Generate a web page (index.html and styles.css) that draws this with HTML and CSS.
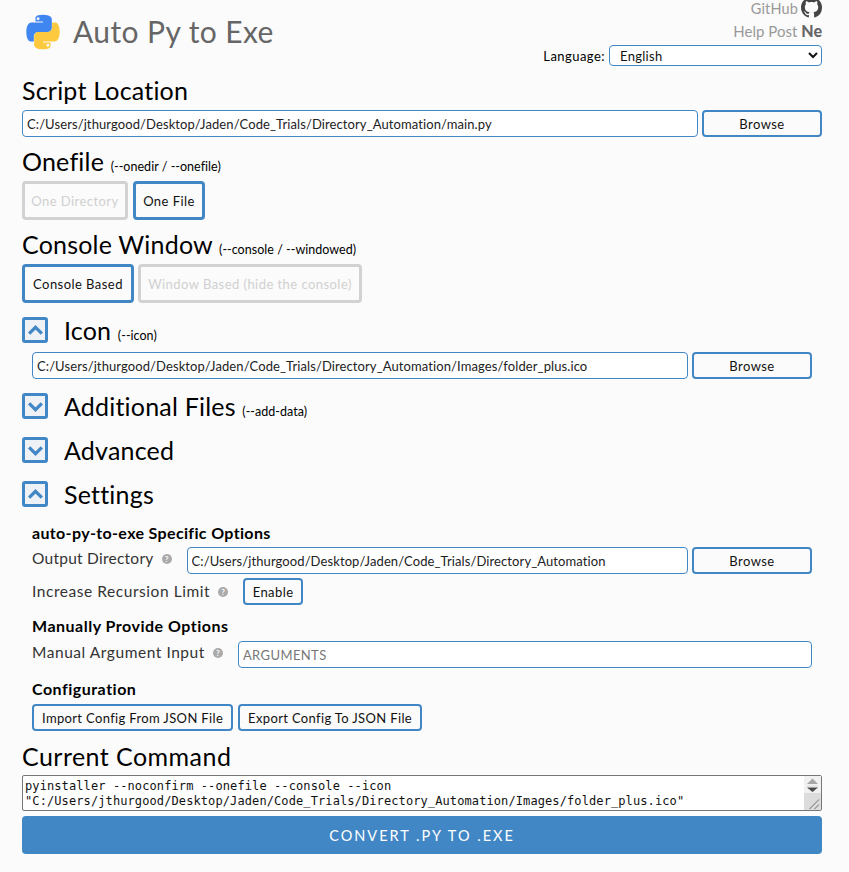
FILE: index.html
```html
<!DOCTYPE html>
<html lang="en">
<head>
<meta charset="utf-8">
<title>Auto Py to Exe</title>
<link rel="stylesheet" href="styles.css">
</head>
<body>
<header class="top">
  <div class="brand">
    <svg class="logo" viewBox="0 0 110 110" width="36" height="36" aria-hidden="true">
      <path fill="#3f86f0" d="M54 2C30 2 32 12 32 12l0 11h23v3H20S4 25 4 55s14 29 14 29h9V70s-1-15 15-15h26s14 1 14-14V17S85 2 54 2zM40 10a4.500 4.500 0 1 1 0 9 4.500 4.500 0 0 1 0-9z"/>
      <path fill="#fdc93e" d="M56 108c24 0 22-10 22-10l0-11H55v-3h35s16 1 16-29-14-29-14-29h-9v14s1 15-15 15H42s-14-1-14 14v24s-3 15 28 15zm14-8a4.500 4.500 0 1 1 0-9 4.500 4.500 0 0 1 0 9z"/>
    </svg>
    <h1 class="title">Auto Py to Exe</h1>
  </div>
  <div class="links">
    <a class="link"><span>GitHub</span>
      <svg class="gh" viewBox="0 0 16 16" width="21" height="21" aria-hidden="true"><path fill="#444" d="M8 0C3.580 0 0 3.580 0 8c0 3.540 2.290 6.530 5.470 7.590.4.070.55-.17.55-.38 0-.19-.01-.82-.01-1.490-2.010.37-2.530-.49-2.690-.94-.09-.23-.48-.94-.82-1.130-.28-.15-.68-.52-.01-.53.63-.01 1.080.58 1.230.82.720 1.210 1.870.87 2.330.66.070-.52.280-.87.510-1.070-1.780-.2-3.640-.89-3.640-3.950 0-.87.310-1.590.82-2.150-.08-.2-.36-1.020.08-2.120 0 0 .67-.21 2.200.82.640-.18 1.320-.27 2-.27s1.360.09 2 .27c1.530-1.040 2.200-.82 2.200-.82.440 1.100.16 1.920.08 2.120.51.560.82 1.270.82 2.150 0 3.070-1.870 3.750-3.650 3.950.29.250.54.730.54 1.480 0 1.070-.01 1.930-.01 2.200 0 .21.150.46.550.38A8.010 8.010 0 0 0 16 8c0-4.420-3.580-8-8-8z"/></svg>
    </a>
    <a class="link help"><span>Help Post</span> <b class="ne">Ne</b></a>
    <div class="lang">
      <label class="lang-label" for="lang">Language:</label>
      <select id="lang" class="lang-select"><option>English</option></select>
    </div>
  </div>
</header>

<h2 class="heading">Script Location</h2>
<div class="file-row">
  <input class="text-input grow" value="C:/Users/jthurgood/Desktop/Jaden/Code_Trials/Directory_Automation/main.py">
  <button class="btn browse">Browse</button>
</div>

<h2 class="heading spaced">Onefile <small class="flag">(--onedir / --onefile)</small></h2>
<div class="choices">
  <button class="btn big off w-dir">One Directory</button>
  <button class="btn big w-file">One File</button>
</div>

<h2 class="heading spaced">Console Window <small class="flag">(--console / --windowed)</small></h2>
<div class="choices">
  <button class="btn big w-con">Console Based</button>
  <button class="btn big off w-win">Window Based (hide the console)</button>
</div>

<section class="section s-icon">
  <div class="sec-head">
    <button class="toggle" aria-label="collapse"><svg viewBox="0 0 16 10" width="17" height="11"><path d="M2 8l6-6 6 6" fill="none" stroke="#4287c5" stroke-width="3"/></svg></button>
    <h2 class="heading sec">Icon <small class="flag">(--icon)</small></h2>
  </div>
  <div class="file-row inner">
    <input class="text-input grow" value="C:/Users/jthurgood/Desktop/Jaden/Code_Trials/Directory_Automation/Images/folder_plus.ico">
    <button class="btn browse">Browse</button>
  </div>
</section>

<section class="section s-files">
  <div class="sec-head">
    <button class="toggle" aria-label="expand"><svg viewBox="0 0 16 10" width="17" height="11"><path d="M2 2l6 6 6-6" fill="none" stroke="#4287c5" stroke-width="3"/></svg></button>
    <h2 class="heading sec">Additional Files <small class="flag">(--add-data)</small></h2>
  </div>
</section>

<section class="section s-adv">
  <div class="sec-head">
    <button class="toggle" aria-label="expand"><svg viewBox="0 0 16 10" width="17" height="11"><path d="M2 2l6 6 6-6" fill="none" stroke="#4287c5" stroke-width="3"/></svg></button>
    <h2 class="heading sec">Advanced</h2>
  </div>
</section>

<section class="section s-adv">
  <div class="sec-head">
    <button class="toggle" aria-label="collapse"><svg viewBox="0 0 16 10" width="17" height="11"><path d="M2 8l6-6 6 6" fill="none" stroke="#4287c5" stroke-width="3"/></svg></button>
    <h2 class="heading sec">Settings</h2>
  </div>
  <div class="settings">
    <h3 class="sub">auto-py-to-exe Specific Options</h3>
    <div class="opt-row o-out">
      <span class="opt-label">Output Directory</span><span class="q">?</span>
      <input class="text-input grow" value="C:/Users/jthurgood/Desktop/Jaden/Code_Trials/Directory_Automation">
      <button class="btn browse">Browse</button>
    </div>
    <div class="opt-row o-rec">
      <span class="opt-label">Increase Recursion Limit</span><span class="q">?</span>
      <button class="btn enable">Enable</button>
    </div>
    <h3 class="sub sub-gap">Manually Provide Options</h3>
    <div class="opt-row o-man">
      <span class="opt-label">Manual Argument Input</span><span class="q">?</span>
      <input class="text-input grow" placeholder="ARGUMENTS">
    </div>
    <h3 class="sub sub-gap">Configuration</h3>
    <div class="config">
      <button class="btn cfg">Import Config From JSON File</button>
      <button class="btn cfg">Export Config To JSON File</button>
    </div>
  </div>
</section>

<h2 class="heading current">Current Command</h2>
<div class="cmd-wrap">
  <textarea class="command" readonly>pyinstaller --noconfirm --onefile --console --icon "C:/Users/jthurgood/Desktop/Jaden/Code_Trials/Directory_Automation/Images/folder_plus.ico"</textarea>
  <svg class="fake-scroll" viewBox="0 0 17 34" width="17" height="34" aria-hidden="true">
    <rect width="17" height="34" fill="#dcdcdc"/>
    <rect width="17" height="17" fill="#f1f1f1"/>
    <path d="M3 8h11L8.500 2.500z" fill="#a6a6a6"/>
    <path d="M3 10h11" stroke="#dadada"/>
    <path d="M3 11.500h11L8.500 16z" fill="#4a4a4a"/>
    <path d="M5.500 33L15 23.500M10.500 33L15 28.500" stroke="#6f6f6f" fill="none"/>
  </svg>
</div>
<button class="convert">CONVERT .PY TO .EXE</button>
</body>
</html>
```

FILE: styles.css
```css
* { box-sizing: border-box; }
html, body { height: 100%; }
body {
  margin: 0;
  padding: 0 27px 0 22px;
  background: #fbfbfb;
  color: #000;
  font-family: "Lato", "Noto Sans", sans-serif;
  overflow: hidden;
}
.top { display: flex; justify-content: space-between; height: 77px; }
.brand { display: flex; align-items: flex-start; padding: 14px 0 0 3px; }
.logo { display: block; }
.title { margin: -1px 0 0 12px; font-size: 30px; line-height: 36px; font-weight: 400; color: #666; letter-spacing: .4px; }
.links { display: flex; flex-direction: column; align-items: flex-end; }
.link { display: flex; align-items: center; height: 18px; font-size: 14.500px; line-height: 18px; letter-spacing: .15px; color: #999; gap: 3px; }
.gh { margin-bottom: 3px; }
.link.help { height: 22px; margin-top: 2px; gap: 4px; font-size: 15px; letter-spacing: 0; }
.ne { font-size: 16px; color: #666; font-weight: 900; }
.lang { display: flex; align-items: center; margin-top: 3px; }
.lang-label { font-size: 13px; letter-spacing: .45px; margin-right: 4px; }
.lang-select {
  width: 213px; height: 21px; padding: 0 0 0 6px;
  font: 13px "Lato", sans-serif; letter-spacing: .3px; color: #111;
  background: #fff; border: 1px solid #4287c5; border-radius: 4px;
}
.heading { margin: 0 0 7px; font-weight: 400; font-size: 25px; line-height: 26px; color: #000; letter-spacing: .2px; }
.spaced { margin-top: 11px; }
.flag { font-size: 12.500px; line-height: 1; font-weight: 400; letter-spacing: .03px; }
.file-row { display: flex; gap: 4px; height: 27px; }
.file-row.inner { margin: 9px 10px 0; }
.grow { flex: 1 1 0; min-width: 0; }
.text-input {
  height: 27px; padding: 0 4px; background: #fff;
  border: 1px solid #4287c5; border-radius: 4px;
  font: 13px "Lato", sans-serif; letter-spacing: .1px; color: #222; outline: none;
}
.text-input::placeholder { color: #777; opacity: 1; letter-spacing: .4px; }
.btn {
  padding: 0; background: #fbfbfb; color: #111;
  border: 2px solid #4287c5; border-radius: 4px;
  font: 13px "Lato", sans-serif; letter-spacing: .45px;
}
.browse { flex: 0 0 120px; height: 27px; }
.choices { display: flex; gap: 5px; }
.big { height: 39px; border-width: 3px; }
.big.off { border-color: #d2d2d2; color: #d0d0d0; }
.w-dir { width: 106px; }
.w-file { width: 72px; }
.w-con { width: 112px; }
.w-win { width: 224px; margin-left: -1px; }
.section { display: block; }
.s-icon { margin-top: 14px; }
.s-files { margin-top: 14px; }
.s-adv { margin-top: 18px; }
.sec-head { display: flex; align-items: center; height: 26px; }
.toggle {
  display: flex; align-items: center; justify-content: center;
  width: 26px; height: 26px; padding: 0; margin-right: 16px;
  background: #eef2f6; border: 3px solid #4287c5; border-radius: 3px;
}
.sec { margin-bottom: 0; }
.settings { padding: 17px 10px 0; }
.sub { margin: 0; font-size: 16px; line-height: 18px; font-weight: 700; color: #000; letter-spacing: .35px; }
.sub-gap { margin-top: 12px; letter-spacing: .5px; }
.opt-row { display: flex; align-items: center; height: 27px; }
.opt-label { font-size: 15.500px; color: #333; letter-spacing: .25px; margin-bottom: 5px; }
.q {
  display: inline-flex; align-items: center; justify-content: center;
  width: 10px; height: 10px; margin: 0 15px 3px 8px; border-radius: 50%;
  background: #aaa; color: #fbfbfb; font-size: 8px; font-weight: 700;
}
.opt-row .browse { margin-left: 4px; }
.o-out { margin-top: 5px; }
.o-rec { margin-top: 4px; }
.o-rec .opt-label { margin-bottom: 1px; letter-spacing: .55px; }
.o-rec .q { margin-bottom: 0; }
.enable { width: 60px; height: 27px; }
.o-man { margin-top: 6px; }
.o-man .opt-label { letter-spacing: .55px; }
.config { display: flex; gap: 5px; margin-top: 6px; }
.cfg { height: 27px; padding: 0 8px; letter-spacing: .35px; }
.current { margin-top: 12px; margin-bottom: 6px; letter-spacing: .45px; }
.cmd-wrap { position: relative; height: 36px; }
.command {
  display: block; width: 100%; height: 36px; padding: 3px 19px 0 2px;
  background: #fff; border: 1px solid #767676; border-radius: 2px;
  font: 12px/15px "DejaVu Sans Mono", monospace; letter-spacing: .1px; color: #111;
  overflow: hidden; resize: none; outline: none;
}
.fake-scroll { position: absolute; top: 1px; right: 1px; display: block; }
.convert {
  display: block; width: 100%; height: 38px; margin-top: 5px; padding: 0;
  background: #4287c5; color: #fff; border: 0; border-radius: 4px;
  font: 14.500px "Lato", sans-serif; letter-spacing: 2px;
}
```
